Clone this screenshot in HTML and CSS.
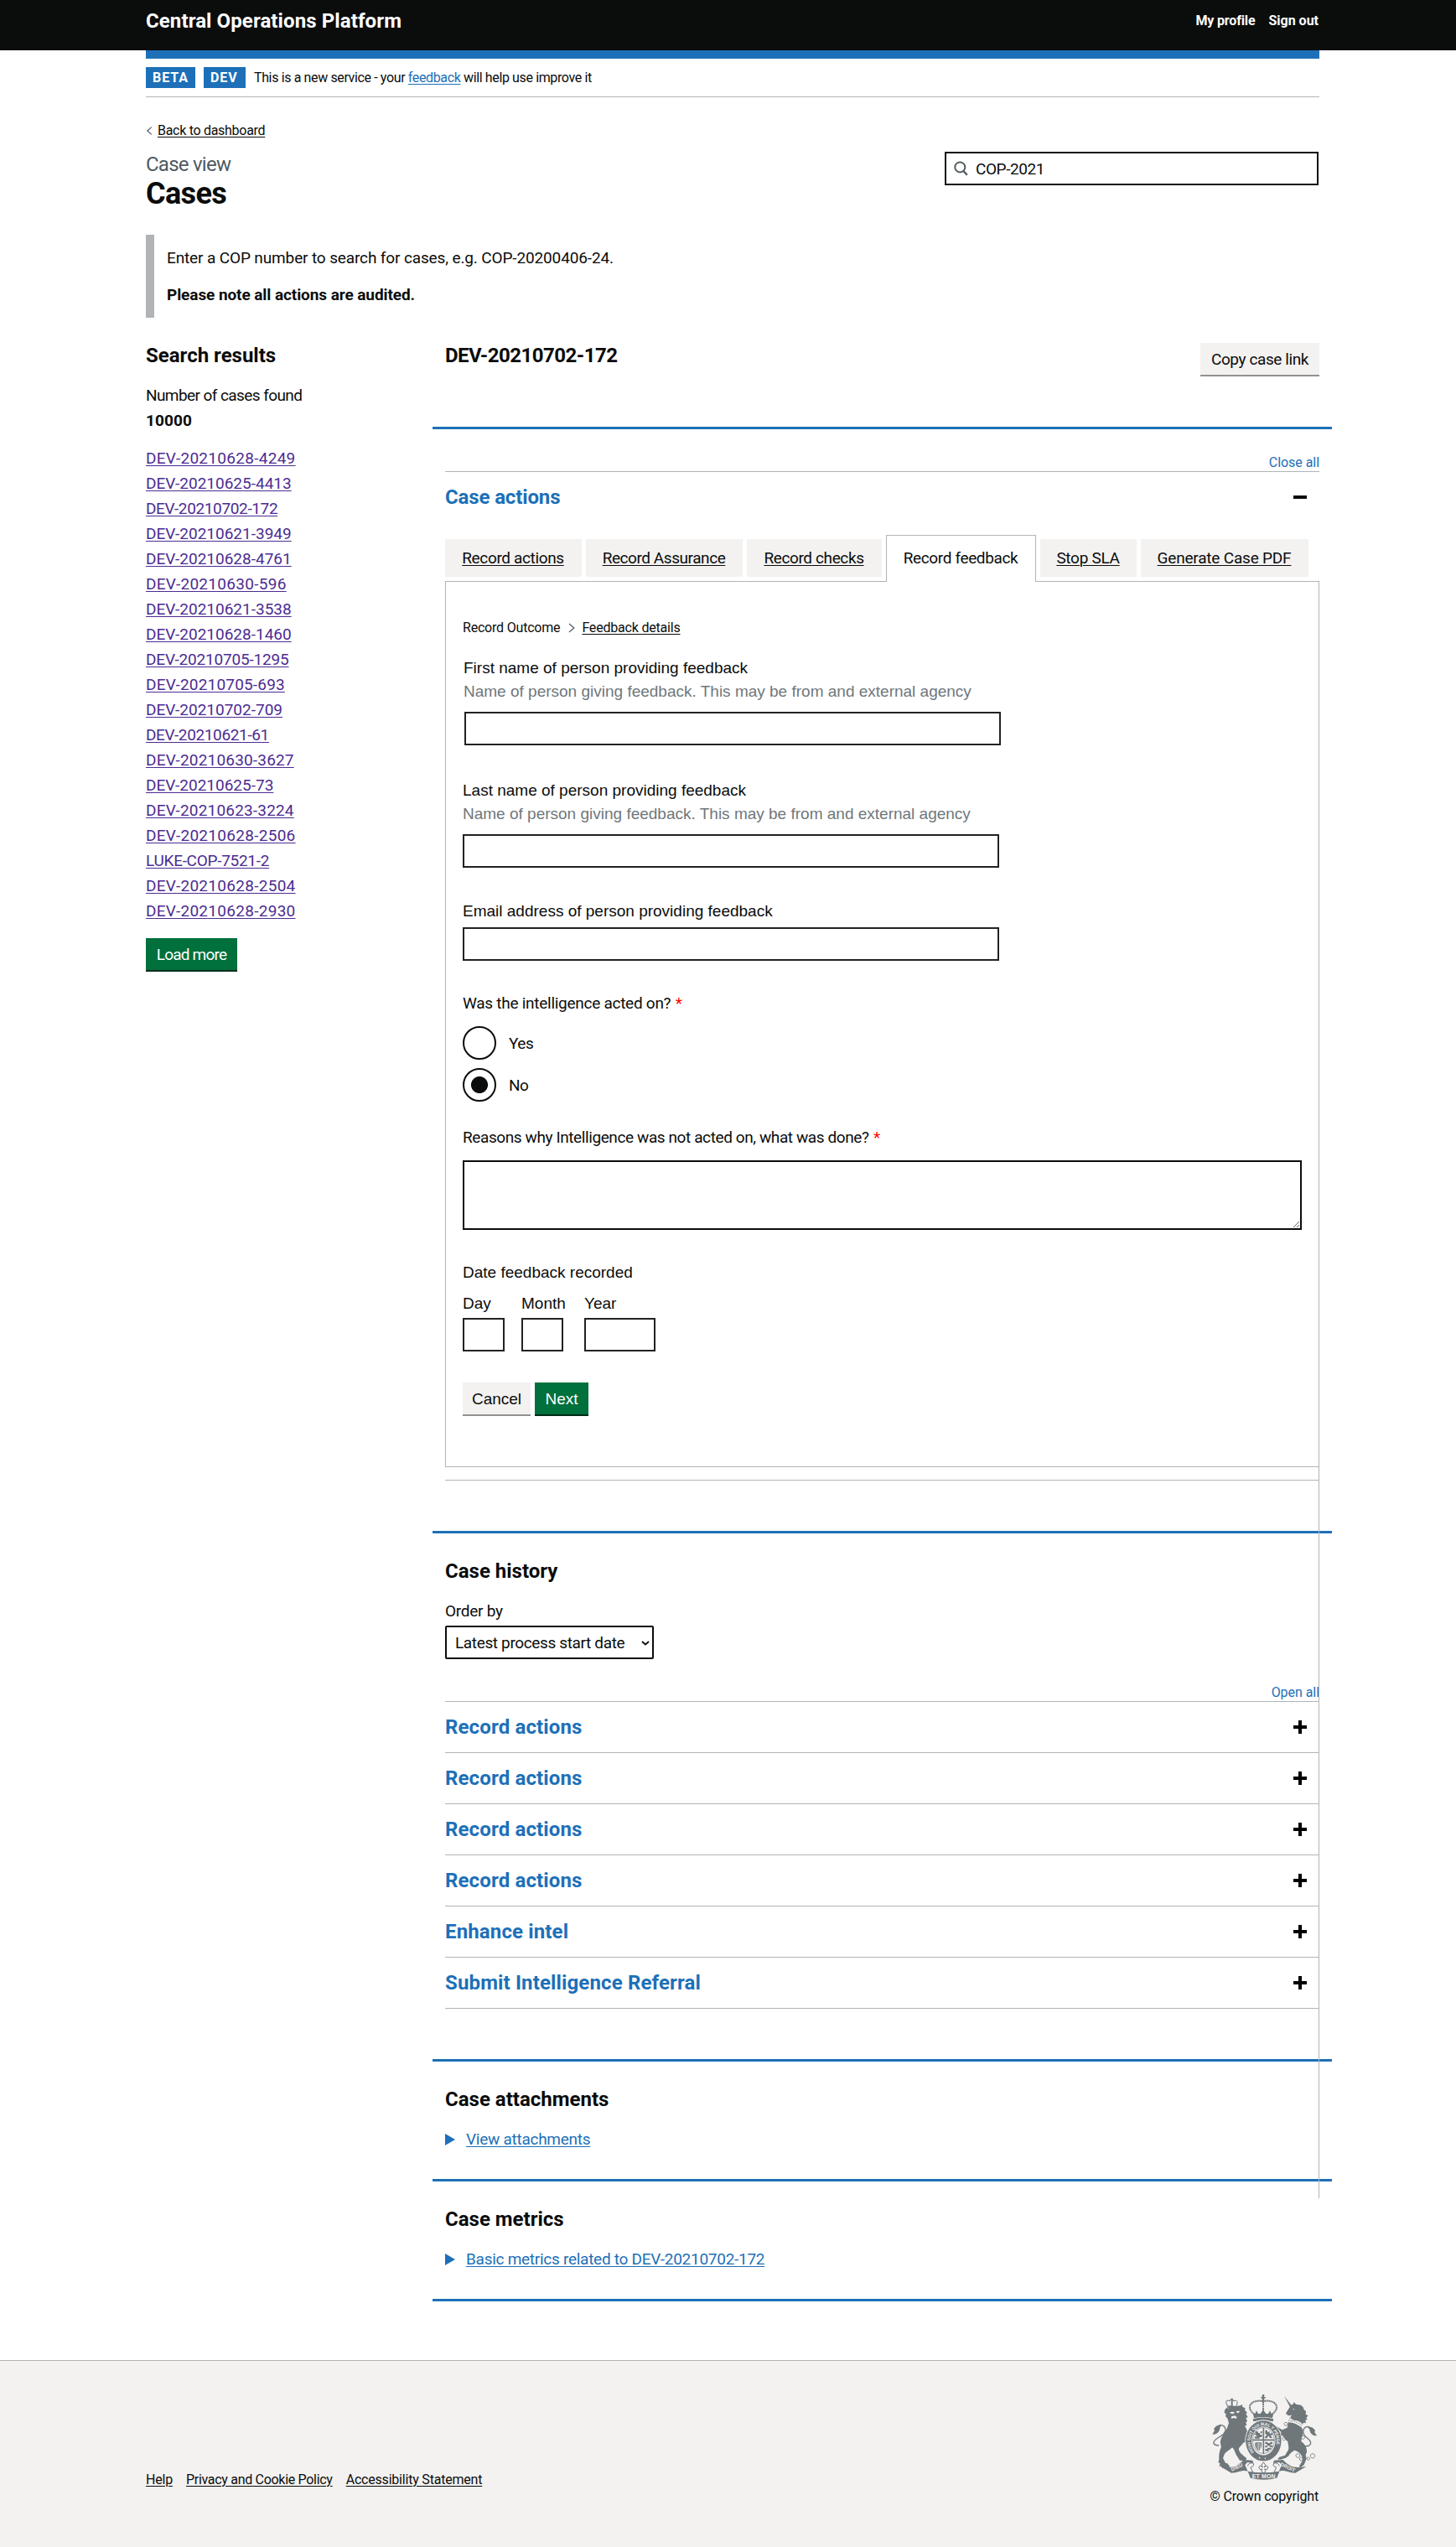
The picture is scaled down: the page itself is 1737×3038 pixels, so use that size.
FILE: index.html
```html
<!DOCTYPE html>
<html lang="en">
<head>
<meta charset="utf-8">
<title>Central Operations Platform</title>
<link rel="stylesheet" href="styles.css">
</head>
<body>
<header class="header">
  <div class="container header-row">
    <a class="header-title" href="#">Central Operations Platform</a>
    <nav class="header-nav"><a class="nav-profile" href="#">My profile</a><a href="#">Sign out</a></nav>
  </div>
</header>
<div class="container">
  <div class="phase-banner">
    <strong class="tag tag-beta">BETA</strong><strong class="tag tag-dev">DEV</strong>
    <span class="phase-text">This is a new service - your <a href="#">feedback</a> will help use improve it</span>
  </div>
  <main>
    <a class="back-link" href="#"><svg width="8" height="10" viewBox="0 0 8 10"><path d="M6.7.6 1.8 5l4.9 4.4" fill="none" stroke="#505a5f" stroke-width="1.2"/></svg><span>Back to dashboard</span></a>
    <div class="title-row">
      <div>
        <span class="caption">Case view</span>
        <h1>Cases</h1>
      </div>
      <div class="search">
        <svg width="17" height="18" viewBox="0 0 17 18"><circle cx="7.3" cy="7.4" r="6" fill="none" stroke="#505a5f" stroke-width="2"/><path d="m11.4 12 4.4 4.7" stroke="#505a5f" stroke-width="2.4"/></svg>
        <input type="text" value="COP-2021" aria-label="Search cases">
      </div>
    </div>
    <div class="inset">
      <p>Enter a COP number to search for cases, e.g. COP-20200406-24.</p>
      <p class="inset-strong">Please note all actions are audited.</p>
    </div>
    <div class="columns">
      <aside class="results">
        <h2>Search results</h2>
        <p class="found">Number of cases found</p>
        <p class="count">10000</p>
        <ul class="case-list">
          <li class="loose"><a href="#">DEV-20210628-4249</a></li>
          <li><a href="#">DEV-20210625-4413</a></li>
          <li class="tightest"><a href="#">DEV-20210702-172</a></li>
          <li><a href="#">DEV-20210621-3949</a></li>
          <li><a href="#">DEV-20210628-4761</a></li>
          <li class="loose"><a href="#">DEV-20210630-596</a></li>
          <li><a href="#">DEV-20210621-3538</a></li>
          <li><a href="#">DEV-20210628-1460</a></li>
          <li class="tight"><a href="#">DEV-20210705-1295</a></li>
          <li class="mid"><a href="#">DEV-20210705-693</a></li>
          <li><a href="#">DEV-20210702-709</a></li>
          <li class="tightest"><a href="#">DEV-20210621-61</a></li>
          <li class="mid"><a href="#">DEV-20210630-3627</a></li>
          <li><a href="#">DEV-20210625-73</a></li>
          <li class="mid"><a href="#">DEV-20210623-3224</a></li>
          <li class="loose"><a href="#">DEV-20210628-2506</a></li>
          <li class="luke"><a href="#">LUKE-COP-7521-2</a></li>
          <li class="loose"><a href="#">DEV-20210628-2504</a></li>
          <li class="loose"><a href="#">DEV-20210628-2930</a></li>
        </ul>
        <button class="button load-more">Load more</button>
      </aside>
      <div class="case">
        <div class="case-head">
          <h2 class="case-id">DEV-20210702-172</h2>
          <button class="button secondary copy-link">Copy case link</button>
        </div>
        <section class="section">
          <div class="toggle-all"><button>Close all</button></div>
          <div class="accordion-row open">
            <h3>Case actions</h3>
            <svg width="16" height="16" viewBox="0 0 16 16"><path d="M0 6h16v4H0z" fill="#0b0c0c"/></svg>
          </div>
          <ul class="tabs">
            <li class="tab t1"><a href="#">Record actions</a></li>
            <li class="tab t2"><a href="#">Record Assurance</a></li>
            <li class="tab t3"><a href="#">Record checks</a></li>
            <li class="tab t4 active"><a href="#">Record feedback</a></li>
            <li class="tab t5"><a href="#">Stop SLA</a></li>
            <li class="tab t6"><a href="#">Generate Case PDF</a></li>
          </ul>
          <div class="panel">
            <nav class="crumbs"><span>Record Outcome</span><svg width="8" height="12" viewBox="0 0 8 12"><path d="M1 1l5.8 5L1 11" fill="none" stroke="#505a5f" stroke-width="1.2"/></svg><a href="#">Feedback details</a></nav>
            <div class="field first">
              <label class="arial" for="fn">First name of person providing feedback</label>
              <span class="hint arial">Name of person giving feedback. This may be from and external agency</span>
              <input class="text-input" id="fn" type="text">
            </div>
            <div class="field second">
              <label class="arial" for="ln">Last name of person providing feedback</label>
              <span class="hint arial">Name of person giving feedback. This may be from and external agency</span>
              <input class="text-input" id="ln" type="text">
            </div>
            <div class="field third">
              <label class="arial" for="em">Email address of person providing feedback</label>
              <input class="text-input" id="em" type="text">
            </div>
            <div class="field fourth">
              <span class="legend-acted">Was the intelligence acted on? <span class="required">*</span></span>
              <div class="radio"><span class="radio-ring"></span><span>Yes</span></div>
              <div class="radio"><span class="radio-ring checked"></span><span>No</span></div>
            </div>
            <div class="field fifth">
              <label class="legend-reasons" for="rs">Reasons why Intelligence was not acted on, what was done? <span class="required">*</span></label>
              <textarea id="rs"></textarea>
            </div>
            <div class="field sixth arial">
              <span class="date-label">Date feedback recorded</span>
              <div class="date-row">
                <div class="date-item"><label for="dd">Day</label><input id="dd" type="text"></div>
                <div class="date-item month"><label for="mm">Month</label><input id="mm" type="text"></div>
                <div class="date-item year"><label for="yy">Year</label><input id="yy" type="text"></div>
              </div>
            </div>
            <div class="actions">
              <button class="button secondary arial cancel">Cancel</button>
              <button class="button arial next">Next</button>
            </div>
          </div>
          <div class="panel-end"></div>
        </section>
        <section class="section">
          <h2>Case history</h2>
          <label class="order-label" for="order">Order by</label>
          <div class="select-wrap">
            <select id="order"><option>Latest process start date</option></select>
            <svg width="10" height="6" viewBox="0 0 10 6"><path d="M1 1l4 3.4L9 1" fill="none" stroke="#0b0c0c" stroke-width="1.9"/></svg>
          </div>
          <div class="toggle-all history"><button>Open all</button></div>
          <div class="accordion">
            <div class="accordion-row"><h3>Record actions</h3><svg width="16" height="16" viewBox="0 0 16 16"><path d="M0 6h6V0h4v6h6v4h-6v6H6v-6H0z"/></svg></div>
            <div class="accordion-row"><h3>Record actions</h3><svg width="16" height="16" viewBox="0 0 16 16"><path d="M0 6h6V0h4v6h6v4h-6v6H6v-6H0z"/></svg></div>
            <div class="accordion-row"><h3>Record actions</h3><svg width="16" height="16" viewBox="0 0 16 16"><path d="M0 6h6V0h4v6h6v4h-6v6H6v-6H0z"/></svg></div>
            <div class="accordion-row"><h3>Record actions</h3><svg width="16" height="16" viewBox="0 0 16 16"><path d="M0 6h6V0h4v6h6v4h-6v6H6v-6H0z"/></svg></div>
            <div class="accordion-row"><h3>Enhance intel</h3><svg width="16" height="16" viewBox="0 0 16 16"><path d="M0 6h6V0h4v6h6v4h-6v6H6v-6H0z"/></svg></div>
            <div class="accordion-row"><h3>Submit Intelligence Referral</h3><svg width="16" height="16" viewBox="0 0 16 16"><path d="M0 6h6V0h4v6h6v4h-6v6H6v-6H0z"/></svg></div>
          </div>
        </section>
        <section class="section compact">
          <h2>Case attachments</h2>
          <a class="details" href="#"><span>View attachments</span></a>
        </section>
        <section class="section compact last">
          <h2>Case metrics</h2>
          <a class="details" href="#"><span>Basic metrics related to DEV-20210702-172</span></a>
        </section>
      </div>
    </div>
  </main>
</div>
<footer class="footer">
  <div class="container footer-row">
    <nav class="footer-links"><a href="#">Help</a><a class="privacy" href="#">Privacy and Cookie Policy</a><a class="access" href="#">Accessibility Statement</a></nav>
    <div class="crown">
      <svg class="crest" width="125" height="102" viewBox="138 228 375 306" fill="#6f777b">
        <!-- central crown -->
        <circle cx="321" cy="232" r="4"/><path d="M318 232h6v14h-6zM313 237h16v5h-16z"/><circle cx="321" cy="249" r="5"/>
        <path d="M321 254c-12-7-44-3-48 17-2 12 8 21 15 27M321 254c12-7 44-3 48 17 2 12-8 21-15 27" fill="none" stroke="#6f777b" stroke-width="6" stroke-dasharray="5 1.5"/>
        <path d="M321 255v32" stroke="#6f777b" stroke-width="6" stroke-dasharray="5 2"/>
        <path d="M284 293l8 4 5-11 6 11 8 0 10-14 10 14 8 0 6-11 5 11 8-4-4 20q-33-8-66 0z"/>
        <path d="M284 316q37-11 74 0l-2 9q-35-10-70 0z"/>
        <!-- lion -->
        <path d="M191 263c-8-10 2-17 10-11-1-8 14-8 14 0 8-6 18 1 11 12l-3 12q-14-6-29-1z" fill="none" stroke="#6f777b" stroke-width="3.5" stroke-dasharray="4 1"/>
        <path d="M206 242h6v30h-6zM195 268l28 1-2 7-24-1z"/>
        <path d="M196 278c10-7 30-8 43-10l7-4 1 9 10 4-2 7 9 9-5 4 7 13-7 2 5 12-5 4 3 11-7 1c8 14 12 27 12 40l8 3-3 9 3 9-9 8-5-8-9-2c-4 6-12 14-17 20-4 7 2 12 5 19l16 14 6 4-5 10-20-2-14-22c-4-10-6-19-13-24-7 8-21 14-27 22l-6 16 9 17 7 2 8 10-4 8-22-2-5-7-6 3 2-13-6-3 3-10c-1-16 1-29 7-43 2-7-4-13-2-23 3-18 16-30 24-47l6-18-5-16-7-8 2-8-6-4c0-8 2-14 9-18z"/>
        <path d="M203 291l12-1 4 4-8 4-9-3zM225 288l12-1-3 6-8 1zM207 307l12-3 8 5-3 6-8-3-9 3z" fill="#f3f2f1"/>
        <path d="M163 410c-22 2-25-11-9-23 16-11 34-19 32-35-2-13-15-18-28-10l-5 12" fill="none" stroke="#6f777b" stroke-width="4"/>
        <path d="M173 335l-20 6-9 10 3 6-8 14c15 1 27-10 27-24z"/>
        <!-- unicorn -->
        <path d="M396 234l28 35-7 4z"/>
        <path d="M420 267l9-5 2-7 7 8 18 3 8 8 3 9 7 5-1 11 9 5-7 7 4 7-7 2 2 11-9-2-3 6c-6-8-17-14-30-14-7-4-13-7-14-13l6-6-13 2-9-7 3-7z"/>
        <path d="M411 321q28 2 49 19M414 313q27 2 47 18" fill="none" stroke="#6f777b" stroke-width="3" stroke-dasharray="4 3"/>
        <path d="M410 328c18-1 33 7 48 18 7 12 7 25 1 36l-2 14c14 10 21 23 20 38l-4 10 3 14-9 22-12 9-6-3 13-22-2-14c-5-12-16-19-27-22-10 7-17 11-21 20l-10 7-20 6-10-1 7-8 20-6 12-20c3-10-2-21-2-30-7-3-14-11-17-20l-14 2-3 15-8-2-2-18 4-6 18-3-17-12-5 6-8-3 1-10 9-4 22 14 18-8z"/>
        <circle cx="430" cy="281" r="2" fill="#f3f2f1"/>
        <path d="M470 413c24 2 26-14 12-26-14-10-19-17-18-28 2-15 15-20 28-11l9 14" fill="none" stroke="#6f777b" stroke-width="4"/>
        <path d="M478 342l20 5 9 9-2 8 8 12c-15 0-25-9-26-23z"/>
        <path d="M402 328a6 6 0 1 0 .1 0M395 380a6 6 0 1 0 .1 0M463 376a6 6 0 1 0 .1 0M445 440a7 7 0 1 0 .1 0M457 453a6 6 0 1 0 .1 0M482 453a5 5 0 1 0 .1 0M498 440a8 8 0 1 0 .1 0" fill="none" stroke="#6f777b" stroke-width="2.5"/>
        <!-- garter and shield -->
        <ellipse cx="322" cy="394" rx="53" ry="62" fill="none" stroke="#f3f2f1" stroke-width="26"/>
        <ellipse cx="322" cy="394" rx="53" ry="62" fill="none" stroke="#6f777b" stroke-width="21"/>
        <ellipse cx="322" cy="393" rx="39" ry="47" fill="none" stroke="#6f777b" stroke-width="2"/>
        <path d="M322 347v93M283 391h78" stroke="#6f777b" stroke-width="5"/>
        <path d="M292 361h11v5h8v-6h6v7h-8v5h8v5h-22v-5h-8v-4h8zM290 379h10v-4h16v6h-8v5h-16zM328 356h8v8l8-4v9l11-4v8l-8 2 8 9h-10l-5-8-6 9h-6v-8l7-3-7-6zM328 398h9v4h9v-4h8v8h-7v4h8v6h-11v-4h-9v6h-7v-7h7v-5h-7zM328 423h8v-4h13v6h-8v6h-12zM293 400l22 0c2 11-1 24-9 30l-8-5c-5-8-8-17-5-25z"/>
        <path d="M300 402v23M305 402v26M310 402v24" stroke="#f3f2f1" stroke-width="2"/>
        <defs><path id="motto" d="M288 434A47 56 0 1 1 356 434"/></defs>
        <text class="garter-text"><textPath href="#motto">HONI SOIT QUI MAL Y PENSE</textPath></text>
        <circle cx="308" cy="455" r="2.4" fill="#f3f2f1"/><circle cx="328" cy="457" r="2.4" fill="#f3f2f1"/>
        <!-- motto ribbon -->
        <path d="M168 486l29 3c24 0 39-10 54-27l32 2 3 10-22-3-8 10 10 22c-21-7-33 5-59 6z"/>
        <path d="M475 486l-29 3c-24 0-39-10-54-27l-32 2-3 10 22-3 8 10-10 22c21-7 33 5 59 6z"/>
        <path d="M266 503q56 10 113 0l-9 24q-47 12-95 0z"/>
        <path d="M265 484q5-13 20-10 5 8-2 12l-7 3 8 18M379 484q-5-13-20-10-5 8 2 12l7 3-8 18" fill="none" stroke="#6f777b" stroke-width="3"/>
        <path d="M322 471l7 9-4 9 9-6 5 6-5 8-8-2 4 8-8 6-8-6 4-8-8 2-5-8 5-6 9 6-4-9z" fill="none" stroke="#6f777b" stroke-width="3"/>
        <text class="ribbon-text" transform="translate(209 503) rotate(-25)">DIEU</text>
        <text class="ribbon-text" transform="translate(380 482) rotate(25)">DROIT</text>
        <text class="ribbon-text wide" x="281" y="527">ET MON</text>
      </svg>
      <span>© Crown copyright</span>
    </div>
  </div>
</footer>
</body>
</html>
```

FILE: styles.css
```css
* { box-sizing: border-box; }
body { margin: 0; background: #fff; color: #0b0c0c; font: 400 19px/25px Roboto, "Liberation Sans", sans-serif; }
h1, h2, h3, p, ul { margin: 0; padding: 0; }
ul { list-style: none; }
a { color: #0b0c0c; text-underline-offset: 2px; text-decoration-thickness: 1px; }
button, input, select, textarea { font: inherit; color: inherit; margin: 0; border-radius: 0; }
svg { display: block; flex: none; }
h2 { font-size: 24px; line-height: 30px; font-weight: 700; }
.container { padding: 0 163px 0 174px; }
.arial { font-family: "Liberation Sans", Arial, sans-serif; letter-spacing: 0; }

.header { height: 60px; background: #0b0c0c; }
.header-row { display: flex; justify-content: space-between; padding-top: 10px; }
.header a { color: #fff; text-decoration: none; font-weight: 700; }
.header-title { font-size: 24px; line-height: 30px; letter-spacing: .1px; }
.header-nav { display: flex; gap: 16px; padding: 5px 1px 0 0; font-size: 16px; line-height: 20px; }
.nav-profile { letter-spacing: -.15px; }

.phase-banner { display: flex; align-items: center; height: 56px; border-top: 10px solid #1d70b8; border-bottom: 1px solid #b1b4b6; font-size: 16px; line-height: 20px; letter-spacing: -.37px; }
.tag { height: 25px; line-height: 25px; padding-left: 8px; background: #1d70b8; color: #fff; letter-spacing: .93px; }
.tag-beta { width: 59px; margin-right: 10px; }
.tag-dev { width: 50px; margin-right: 10px; }
.phase-text a, .toggle-all button, .accordion-row h3, .details { color: #1d70b8; }

.back-link { display: flex; align-items: center; gap: 6px; margin-top: 30px; height: 20px; font-size: 16px; line-height: 20px; letter-spacing: -.29px; text-decoration: none; }
.back-link span { text-decoration: underline; text-underline-offset: 2px; }
.title-row { display: flex; justify-content: space-between; margin-top: 15px; height: 99px; }
.caption { display: block; height: 30px; color: #505a5f; font-size: 24px; line-height: 30px; letter-spacing: -.75px; }
h1 { font-size: 36px; line-height: 40px; letter-spacing: -.6px; }
.search { display: flex; align-items: center; gap: 9px; width: 446px; height: 40px; padding-left: 9px; border: 2px solid #0b0c0c; margin-right: 1px; }
.search input { flex: 1; min-width: 0; height: 32px; padding: 0; border: 0; letter-spacing: -.41px; background: none; }
.inset { height: 99px; padding: 15px; border-left: 10px solid #b1b4b6; letter-spacing: -.13px; }
.inset-strong { margin-top: 19px; font-weight: 700; letter-spacing: -.08px; }

.columns { display: flex; margin-top: 30px; }
.results { width: 357px; }
.results p { line-height: 30px; }
.found { margin-top: 18px; letter-spacing: -.58px; }
.count { font-weight: 700; letter-spacing: .12px; }
.case-list { margin: 15px 0 17px; line-height: 30px; }
.case-list a { color: #4c2c92; }
.case-list .loose { letter-spacing: .29px; }
.case-list .mid { letter-spacing: .18px; }
.case-list .tight { letter-spacing: -.18px; }
.case-list .tightest { letter-spacing: -.36px; }
.case-list .luke { letter-spacing: -.28px; }
.button { display: block; height: 40px; padding: 7px 0 6px; border: 0; border-bottom: 2px solid #002d18; background: #00703c; color: #fff; line-height: 25px; text-align: center; }
.secondary { background: #f3f2f1; color: #0b0c0c; border-bottom-color: #929191; }
.load-more { width: 109px; letter-spacing: -.8px; }
.copy-link { width: 142px; letter-spacing: -.4px; }

.case { flex: 1; min-width: 0; }
.case-head { display: flex; justify-content: space-between; height: 100px; }
.case-id { letter-spacing: -.52px; }
.section { margin: 0 -15px; padding: 30px 15px 60px; border-top: 3px solid #1d70b8; }
.section.compact { padding-bottom: 35px; }
.section.last { border-bottom: 3px solid #1d70b8; }
.toggle-all { display: flex; justify-content: flex-end; height: 20px; }
.toggle-all button { padding: 0; border: 0; background: none; font-size: 16px; line-height: 20px; letter-spacing: -.05px; }
.toggle-all.history { margin-top: 30px; }
.accordion { border-bottom: 1px solid #b1b4b6; }
.accordion-row { display: flex; align-items: center; justify-content: space-between; height: 61px; padding-right: 15px; border-top: 1px solid #b1b4b6; }
.accordion-row h3 { font-size: 24px; line-height: 30px; letter-spacing: .14px; }
.accordion-row.open { margin-bottom: 15px; }
.accordion-row.open h3 { letter-spacing: -.13px; }

.tabs { display: flex; gap: 5px; height: 55px; }
.tab { height: 45px; margin-top: 5px; padding: 10px 1px 0 0; background: #f3f2f1; text-align: center; }
.t1 { width: 163px; letter-spacing: -.36px; }
.t2 { width: 187px; letter-spacing: -.44px; }
.t3 { width: 161px; letter-spacing: -.38px; }
.t4 { width: 179px; letter-spacing: -.36px; }
.t5 { width: 115px; letter-spacing: -.3px; }
.t6 { width: 200px; letter-spacing: -.2px; }
.tab.active { position: relative; z-index: 1; height: 56px; margin-top: 0; padding-top: 14px; border: 1px solid #b1b4b6; border-bottom: 0; background: #fff; }
.active a { text-decoration: none; }
.panel { position: relative; height: 1057px; padding: 45px 20px 0; border: 1px solid #b1b4b6; }
/* the right rule runs on past the panel, over the sections below */
.panel::after { content: ""; position: absolute; z-index: 2; top: 0; right: -1px; width: 1px; height: 1928px; background: #b1b4b6; }
.panel-end { margin-top: 15px; border-bottom: 1px solid #b1b4b6; }
.crumbs { display: flex; align-items: center; height: 20px; font-size: 16px; line-height: 20px; letter-spacing: -.2px; }
.crumbs svg { margin: 0 8px 0 10px; }
.field { display: flex; flex-direction: column; align-items: flex-start; }
.hint { margin-top: 3px; color: #6f777b; }
.first { margin-top: 25px; padding-left: 1px; }
.first .text-input { margin-left: 1px; }
.second { margin-top: 41px; }
.third { margin-top: 39px; }
.fourth { margin-top: 38px; }
.fifth { margin-top: 30px; }
.sixth { margin-top: 38px; }
.text-input { width: 640px; height: 40px; margin-top: 12px; border: 2px solid #222; background: #fff; }
.third .text-input { margin-top: 7px; }
.legend-acted { margin-bottom: 5px; letter-spacing: -.27px; }
.legend-reasons { letter-spacing: -.4px; }
.required { margin-left: 1px; color: #f00; }
.radio { display: flex; align-items: center; gap: 15px; height: 40px; margin-top: 10px; letter-spacing: -.5px; }
.radio-ring { width: 40px; height: 40px; border: 2px solid #0b0c0c; border-radius: 50%; }
.radio-ring.checked { background: radial-gradient(circle, #0b0c0c 9.6px, transparent 10.4px); }
textarea { width: 1001px; height: 83px; margin-top: 15px; border: 2px solid #0b0c0c; background: #fff; }
.date-row { display: flex; margin-top: 12px; }
.date-item { display: flex; flex-direction: column; width: 70px; }
.date-item input { width: 50px; height: 40px; margin-top: 5px; border: 2px solid #222; background: #fff; }
.date-item.month { width: 75px; }
.date-item.year { width: 85px; }
.date-item.year input { width: 85px; }
.actions { display: flex; gap: 5px; margin-top: 37px; }
.cancel { width: 81px; }
.next { width: 64px; }

.order-label { display: block; margin: 20px 0 5px; letter-spacing: -.26px; }
.select-wrap { position: relative; width: 249px; height: 40px; }
.select-wrap select { appearance: none; width: 249px; height: 40px; padding: 0 10px; border: 2px solid #0b0c0c; border-radius: 2px; background: #fff; letter-spacing: -.36px; }
.select-wrap svg { position: absolute; right: 5px; top: 18px; }
.details { display: flex; align-items: center; gap: 13px; height: 25px; margin-top: 20px; letter-spacing: -.27px; text-decoration: none; }
.details::before { content: ""; border: solid transparent; border-width: 7px 0 7px 12px; border-left-color: #1d70b8; }
.details span { text-decoration: underline; text-underline-offset: 2px; }

.footer { height: 223px; margin-top: 70px; border-top: 1px solid #b1b4b6; background: #f3f2f1; font-size: 16px; line-height: 20px; }
.footer-row { display: flex; justify-content: space-between; padding-top: 40px; }
.footer-links { display: flex; gap: 16px; margin-top: 92px; letter-spacing: -.2px; }
.privacy { letter-spacing: -.3px; }
.crown { display: flex; flex-direction: column; align-items: center; padding-right: 1px; letter-spacing: -.16px; }
.crest { margin: 0 0 10px; }
.garter-text { font: 700 15.5px "Liberation Sans", sans-serif; fill: #f3f2f1; letter-spacing: -.2px; }
.ribbon-text { font: 700 18px "Liberation Sans", sans-serif; fill: #f3f2f1; letter-spacing: .3px; }
.ribbon-text.wide { font-size: 21px; letter-spacing: .4px; }
```
